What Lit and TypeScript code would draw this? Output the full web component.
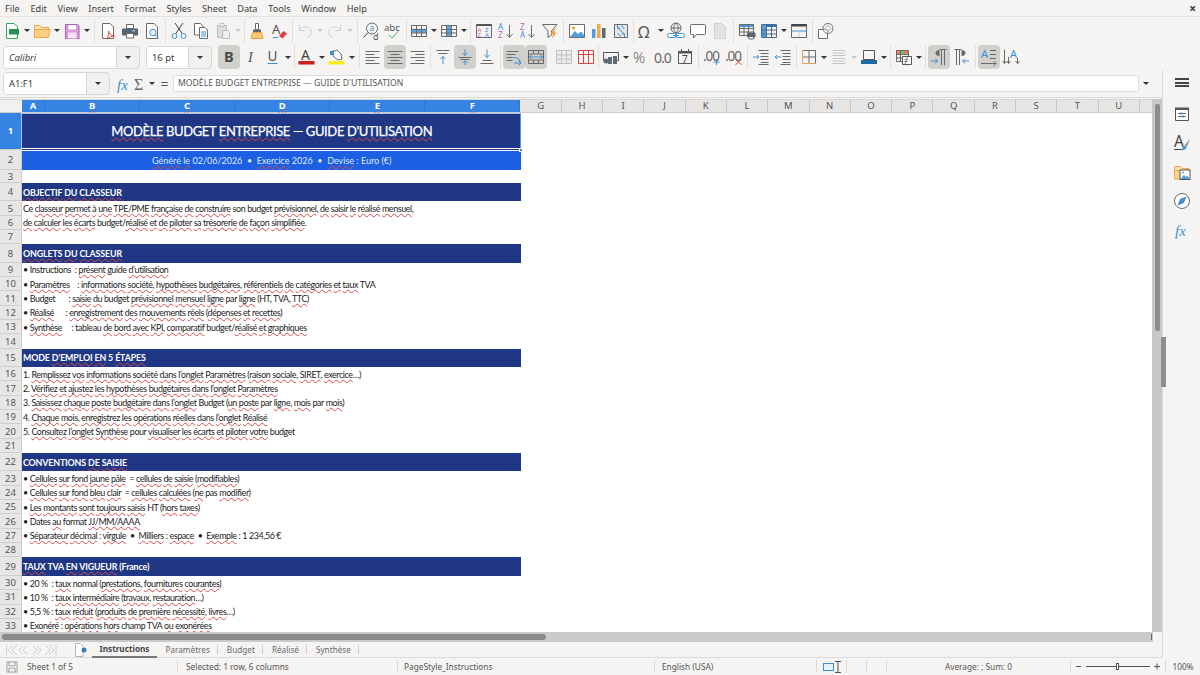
import { html, css, svg, LitElement, TemplateResult } from 'lit';
import { customElement } from 'lit/decorators.js';

const G = '#6a6a6a';
const B = '#3a8fd6';
const T = (x: number, y: number, s: string, size: number, fill = '#555', extra = '') =>
  svg`<text x=${x} y=${y} font-size=${size} fill=${fill} style=${extra}>${s}</text>`;
const P = (d: string, c = G, f = 'none') => svg`<path d=${d} stroke=${c} fill=${f} />`;
const grid = (c = G) =>
  P('M1.5 3.5h15v11h-15zM1.5 7.5h15M1.5 11h15M6.5 3.5v11M11.5 3.5v11', c);

const icons: Record<string, TemplateResult> = {
  new: svg`${P('M3.5 1.5h7.5l3.5 3.5v11.5h-11z', '#35a266', '#fff')}<rect x="6" y="7" width="10" height="5.5" fill="#2a8f52" />`,
  open: svg`${P('M1.5 3.5h5.5l1.5 2h7v2h-14z', '#eda54a', '#fde3b4')}${P('M1.5 7.5h15.5l-1.5 8h-14z', '#eda54a', '#fccf85')}`,
  save: svg`${P('M2.5 2.5h12l1.5 1.5v12.5h-13.5z', '#b657bb', '#d89bdc')}<rect x="5.5" y="3" width="7.5" height="4.5" fill="#fff" /><rect x="5" y="10.5" width="8.5" height="6" fill="#f4e4f5" />`,
  pdf: svg`${P('M3.5 1.5h7.5l3.5 3.5v11.5h-11z', G, '#fff')}${P('M8 16c2-2 2-6 1.5-7c1 3 3 5 6 5c-3 0-5 1-7 3', '#d84a3a')}`,
  print: svg`${P('M5.5 2.5h7v4h-7z', G, '#fff')}<rect x="1" y="6.5" width="16" height="7" rx="1" fill="#56656f" /><rect x="11" y="8" width="3" height="1.5" fill="#8fc0e6" />${P('M5.5 11.5h7v4.5h-7z', G, '#fff')}`,
  preview: svg`${P('M3.5 1.5h7.5l3.5 3.5v11.5h-11z', G, '#fff')}<circle cx="10" cy="10.5" r="3.2" stroke=${B} fill="#e5f1fb" />${P('M12.5 13l3 3.5', B)}`,
  cut: svg`${P('M5 1l7.5 11M13 1l-7.5 11', '#444')}<circle cx="4.5" cy="14" r="2.5" stroke=${B} fill="none" /><circle cx="13.5" cy="14" r="2.5" stroke=${B} fill="none" />`,
  copy: svg`${P('M2.5 1.5h6l2.5 2.5v9h-8.5z', G, '#fff')}${P('M7.5 5.5h5.5l2.5 2.5v8.5h-8z', G, '#fff')}${P('M9 10h5M9 12h5M9 14h5', B)}`,
  paste: svg`${P('M3.5 3.5h9v12h-9z', '#bcbcbc', '#dedede')}${P('M6 1.5h4v3h-4z', '#bcbcbc', '#f0f0f0')}${P('M8.5 8.5h5l2 2v6h-7z', '#bcbcbc', '#efefef')}`,
  clone: svg`${P('M7.5 1.5h3v6h-3z', '#6a6a6a', '#fff')}<rect x="5" y="7.5" width="8" height="2.5" fill="#666" />${P('M4.5 10.5h9l1.5 6h-12z', '#e8a33d', '#fcc77a')}`,
  clear: svg`${T(2, 12, 'A', 13, '#555')}${P('M3 15.5h5', B)}<path d="M9 14l4.5-5l3.5 2.5l-4.5 5z" fill="#e23b3b" />`,
  undo: svg`${P('M3.5 3v5.5h5.5', '#cfcfcf')}${P('M3.5 8.5c3-5 10-5 11.5 0c1 3-1 6-4 7', '#cfcfcf')}`,
  redo: svg`<g transform="matrix(-1 0 0 1 18 0)">${P('M3.5 3v5.5h5.5', '#cfcfcf')}${P('M3.5 8.5c3-5 10-5 11.5 0c1 3-1 6-4 7', '#cfcfcf')}</g>`,
  find: svg`<circle cx="10" cy="6.5" r="5.5" stroke=${G} fill="none" />${P('M6 10.5l-4.5 5', '#444')}${T(7.6, 9, 'a', 8, B)}${T(11, 17.5, 'd', 9, '#555')}`,
  spell: svg`${T(0, 8.5, 'abc', 9.5, '#555')}${P('M5 13l3 3l6-6.5', '#45b36b')}`,
  rows: svg`<rect x="1.5" y="6.8" width="15" height="4" fill="#5aa5e6" />${grid()}`,
  cols: svg`<rect x="6.5" y="3.5" width="5" height="11" fill="#5aa5e6" />${grid()}`,
  sort: svg`${P('M1.5 2.5h15v13h-15z', G)}<rect x="1.5" y="2" width="15" height="2" fill="#555" />${T(2.4, 9.5, 'A', 6, '#c45cc4')}${T(2.4, 15, 'Z', 6, '#c45cc4')}${T(10, 9.5, 'Z', 6, B)}${T(10, 15, 'A', 6, B)}`,
  asc: svg`${T(1, 8, 'A', 8, B)}${T(1, 16, 'Z', 8, '#c45cc4')}${P('M12.5 3v12M9.5 12l3 3.5l3-3.5', G)}`,
  desc: svg`${T(1, 8, 'Z', 8, '#c45cc4')}${T(1, 16, 'A', 8, B)}${P('M12.5 3v12M9.5 12l3 3.5l3-3.5', G)}`,
  filter: svg`${P('M1.5 2.5h14.5l-5.5 6.5v4l-3.5 2.5v-6.5z', G)}<path d="M13 7l-3.5 5h2.5l-1 4.5l4.5-6h-2.5l1.5-3.5z" fill="#f0a030" />`,
  image: svg`${P('M1.5 2.5h15v13h-15z', G, '#fff')}<circle cx="5.5" cy="6" r="1.6" fill="#f0a030" /><path d="M2 15l5-6l3 3l3-2.5l3 3.5v2z" fill="#4f9ddf" />`,
  chart: svg`<rect x="2" y="7" width="3.5" height="9" fill="#4f9ddf" /><rect x="7" y="2" width="3.5" height="14" fill="#f0a848" /><rect x="12" y="6" width="3.5" height="10" fill="#5c6b75" />`,
  pivot: svg`${P('M2.5 2.5h13v13h-13z', G, '#e9e9e9')}${P('M5.5 3v3h3M5.5 6l7 6M12.5 15v-3h-3M6 11c0 2 2 3 3 3M12 7c0-2-2-3-3-3', B)}`,
  omega: svg`${T(1, 15.5, 'Ω', 16, '#555')}`,
  link: svg`<circle cx="9" cy="6" r="5" stroke=${G} fill="none" />${P('M4 6h10M9 1c-3 3-3 7 0 10M9 1c3 3 3 7 0 10', G)}${P('M2.5 11.5h5a2 2 0 0 1 0 4h-5a2 2 0 0 1 0-4zM10.5 11.5h5a2 2 0 0 1 0 4h-5a2 2 0 0 1 0-4zM6 13.5h6', B, '#fff')}`,
  comment: svg`${P('M2.5 2.5h13a1 1 0 0 1 1 1v8a1 1 0 0 1-1 1h-8l-3 3.5v-3.5h-2a1 1 0 0 1-1-1v-8a1 1 0 0 1 1-1z', G, '#fff')}`,
  headers: svg`${P('M3.5 1.5h7.5l3.5 3.5v11.5h-11z', '#cfcfcf', '#e2e2e2')}`,
  tprint: svg`<rect x="1.5" y="2" width="14" height="3" fill="#4f9ddf" />${P('M1.5 2.5h14v11h-14zM1.5 6.5h14M1.5 10h14M6 2.5v11M10.5 2.5v11', G)}<rect x="9" y="10.5" width="8.5" height="5" rx="1" fill="#56656f" />${P('M11 14.5h4.5v2.5H11z', G, '#fff')}`,
  freeze: svg`<rect x="2" y="2" width="14" height="3" fill="#2d78bf" /><rect x="2" y="2" width="4" height="14" fill="#4f9ddf" />${P('M1.5 2.5h15v13h-15zM1.5 8h15M1.5 12h15M6.5 2.5v13M11.5 2.5v13', '#4b6b86')}`,
  split: svg`${P('M1.5 2.5h15v13h-15z', G)}<rect x="1.5" y="2" width="15" height="2.5" fill="#444" />${P('M1.5 9h15', B)}${P('M9 9v6', '#cfcfcf')}`,
  shapes: svg`${P('M1.5 7.5h9v9h-9z', G, '#fff')}<circle cx="11" cy="6.5" r="5" stroke=${G} fill="#fff" fill-opacity="0.5" />${P('M11 3.5l3 3l-3 3l-3-3z', '#999')}`,
  bold: svg`${T(4, 14, 'B', 14.5, '#4a4a4a', 'font-weight:700')}`,
  ital: svg`${T(6, 14, 'I', 14.5, '#555', 'font-family:Liberation Serif;font-style:italic')}`,
  under: svg`${T(3.6, 12.5, 'U', 13.5, '#555')}${P('M3.5 15.5h10', B)}`,
  color: svg`${T(3, 12, 'A', 14, '#444')}<rect x="0.5" y="13" width="16" height="3.5" fill="#c9211e" />`,
  hilite: svg`${P('M4 3h3l2-1l4 4l1 5l-4 1l-5-4z', G, '#fff')}<path d="M2 3h4v4h-4z" fill=${B} /><rect x="0.5" y="13" width="16" height="3.5" fill="#ffed1f" />`,
  aleft: P('M1.5 3.5h14M1.5 6.5h9M1.5 9.5h14M1.5 12.5h9M1.5 15.5h14'),
  acenter: P('M1.5 3.5h15M4.5 6.5h9M1.5 9.5h15M4.5 12.5h9M1.5 15.5h15'),
  aright: P('M2.5 3.5h14M7.5 6.5h9M2.5 9.5h14M7.5 12.5h9M2.5 15.5h14'),
  vtop: svg`${P('M2.5 2.5h13M4.5 5.5h9', G)}${P('M9 16V8.5M6.5 11l2.5-2.5l2.5 2.5', B)}`,
  vmid: svg`${P('M2.5 9.5h13M4.5 11.5h9', G)}${P('M9 1.5v6M6.5 5l2.5 2.5l2.5-2.5M9 17v-4M6.5 15l2.5-2.5l2.5 2.5', B)}`,
  vbot: svg`${P('M2.5 15.5h13M4.5 12.5h9', G)}${P('M9 1.5v8M6.5 7l2.5 2.5l2.5-2.5', B)}`,
  wrap: svg`${P('M1.5 3.5h12M1.5 6.5h9M1.5 9.5h6M1.5 12.5h6', G)}${P('M7 9.5c5 0 8 1 8 5M9 15h7M13.5 12.5l2.5 2.5l-2.5 2.5', B)}`,
  merge: svg`${P('M1.5 2.5h15v13h-15z', '#666')}${P('M1.5 6h15M1.5 12h15M6.5 2.5v3.5M11.5 2.5v3.5M6.5 12v3.5M11.5 12v3.5', '#666')}${P('M2 9h14M4.5 7l-2 2l2 2M13.5 7l2 2l-2 2', B)}`,
  unmerge: svg`${P('M1.5 2.5h15v13h-15zM1.5 7h15M1.5 11h15M6.5 2.5v13M11.5 2.5v13', '#c2c2c2', '#ececec')}`,
  delrow: svg`${P('M1.5 2.5h15v13h-15zM1.5 6.5h15M6.5 2.5v13M11.5 2.5v13', '#d04a45')}`,
  curr: svg`${P('M1.5 4.5h15v8h-2M1.5 4.5v8h4', '#555')}<rect x="6" y="9" width="4" height="7" fill="#5c6b75" /><rect x="11" y="8" width="4" height="8" fill="#5c6b75" /><circle cx="4" cy="13" r="2.5" fill="#5c6b75" />`,
  pct: svg`${T(1, 15, '%', 15, '#666', 'font-weight:300')}`,
  num: svg`${T(0, 14.5, '0.0', 14, '#666', 'letter-spacing:-1px')}`,
  date: svg`${P('M2.5 3.5h13v12h-13z', '#555')}<rect x="2" y="3" width="14" height="2.5" fill="#555" />${P('M5.5 1v3M12.5 1v3', '#555')}${T(6, 14.5, '7', 10, '#444')}`,
  adddec: svg`${T(0, 13, '.00', 13.5, '#666', 'letter-spacing:-1px')}${P('M13.5 11v6M10.5 14h6', B)}`,
  deldec: svg`${T(0, 13, '.00', 13.5, '#666', 'letter-spacing:-1px')}${P('M10.5 11l6 6M16.5 11l-6 6', '#e0443e')}`,
  indent: svg`${P('M6.5 2.5h10M8.5 5.5h8M8.5 8.5h8M8.5 11.5h8M8.5 14.5h8M6.5 16.5h10', G)}${P('M1 9h6M5 7l2 2l-2 2', B)}`,
  outdent: svg`${P('M6.5 2.5h10M8.5 5.5h8M8.5 8.5h8M8.5 11.5h8M8.5 14.5h8M6.5 16.5h10', G)}${P('M7 9H1M3 7l-2 2l2 2', B)}`,
  border: svg`${P('M2.5 2.5h13v13M9 2.5v13M2.5 9h13', G)}${P('M2.5 2.5v13h13', '#e8a060')}`,
  bstyle: P('M2.5 2.5h13M2.5 5h13M2.5 7.5h13M2.5 10.5h13M2.5 13h13M2.5 15.5h13', '#c4c4c4'),
  bcolor: svg`${P('M3.5 2.5h11v9h-11z', '#555')}<rect x="1" y="12" width="16" height="4" fill="#1c68a8" />`,
  cond: svg`<rect x="1" y="2" width="13" height="4" fill="#e97a6c" /><rect x="5.5" y="2" width="4" height="4" fill="#72bf6f" />${P('M1.5 2.5h12v11h-12zM1.5 6.5h12M1.5 10h12M5.5 2.5v11', G)}${P('M7.5 8.5h9v8h-9z', '#555', '#fff')}${T(9, 15.5, '≠', 8, '#444')}`,
  ltr: svg`${P('M9.5 1.5h7M11.5 2v15M14.5 2v15', G)}<path d="M9.5 2c-3 0-4 1.5-4 3s1 3 4 3z" fill=${G} />${P('M0.5 13h7M5 10.5l2.5 2.5l-2.5 2.5', B)}`,
  rtl: svg`${P('M2.5 1.5h7M4.5 2v15M7.5 2v15', G)}<path d="M9.5 2c3 0 4 1.5 4 3s-1 3-4 3z" fill=${G} />${P('M17 13h-6M13 10.5l-2.5 2.5l2.5 2.5', B)}`,
  horiz: svg`${T(1, 9.5, 'A', 11, B)}${P('M10 2.5h6M10 6.5h6M10 10.5h6M1 15.5h15M13.5 13l2.5 2.5l-2.5 2.5', G)}`,
  vert: svg`${T(8, 10, 'A', 11, B)}${P('M2.5 1.5v14M0.5 13l2 2.5l2-2.5M6.5 9v6.5M4.5 13l2 2.5l2-2.5M15.5 10v5.5M13.5 13l2 2.5l2-2.5', G)}`,
  props: svg`${P('M2.5 3.5h13v12h-13z', '#555', '#fff')}<rect x="2" y="2.5" width="14" height="2.5" fill="#555" />${P('M5 8.5h8M5 11.5h8', G)}${P('M8 7v3M10 10v3', B)}`,
  styles: svg`${T(1, 13, 'A', 15.5, '#444')}${P('M1 15.5h8', '#444')}<path d="M17 5l-5 6l2 1.5z" fill="#888" /><path d="M10 12c2-1 4 0 3.5 2c-1 2-4 2.5-5.500 2c1-.5 1.500-2 2-4z" fill="#4f9ddf" />`,
  gallery: svg`${P('M1.5 3.5h6l1.5 2h7v2h-14.5z', '#eda54a', '#fde3b4')}${P('M1.5 7.5h7v8.5h-7z', '#eda54a', '#fcd28d')}<rect x="7" y="7" width="10" height="9.5" fill="#fff" stroke="#555" /><path d="M7.5 16l3.5-4l2 2l1.5-1.5l2 3.5z" fill="#4f9ddf" /><circle cx="10" cy="9.5" r="1" fill="#4f9ddf" />`,
  nav: svg`<circle cx="9" cy="9" r="7.5" stroke=${G} fill="#fff" /><path d="M13.5 4.5l-2.5 6.5l-6.5 2.5l2.500-6.500z" fill="#3f8fd2" />`,
  fx: svg`${T(2, 14.5, 'fx', 15, B, 'font-family:Liberation Serif;font-style:italic')}`,
  sum: svg`${T(3, 15, 'Σ', 16, '#666', 'font-family:Liberation Serif')}`,
};

const tb1: (string | number)[] = ['new', 'a', 'open', 'a', 'save', 'a', 6, 'pdf', 'print', 'preview', 5, 'cut', 'copy', 'paste', 'd', 4,
  'clone', 'clear', 4, 'undo', 'd', 'redo', 'd', 6, 'find', 'spell', 4, 'rows', 'a', 'cols', 'a', 5, 'sort', 'asc', 'desc', 'filter', 5,
  'image', 'chart', 'pivot', 3, 'omega', 'a', 'link', 'comment', 'headers', 5, 'tprint', 'freeze', 'a', 'split', 5, 'shapes'];
const tb2: (string | number)[] = ['*bold', 'ital', 'under', 'a', 4, 'color', 'a', 'hilite', 'a', 6, 'aleft', '*acenter', 'aright', 4,
  'vtop', '*vmid', 'vbot', 5, '*wrap', '*merge', -6, 'unmerge', 'delrow', 3, 'curr', 'a', 'pct', 'num', 'date', 5, 'adddec', 'deldec', 5,
  'indent', 'outdent', 4, 'border', 'a', 'bstyle', 'd', 'bcolor', 'a', 5, 'cond', 'a', 5, '*ltr', 'rtl', 6, '*horiz', 'vert'];

const menus = ['File', 'Edit', 'View', 'Insert', 'Format', 'Styles', 'Sheet', 'Data', 'Tools', 'Window', 'Help'];
const columns = ['A', 'B', 'C', 'D', 'E', 'F', 'G', 'H', 'I', 'J', 'K', 'L', 'M', 'N', 'O', 'P', 'Q', 'R', 'S', 'T', 'U'];

// kind + text, ~word~ gets the spell check underline
const rows: [string, string][] = [
  ['title', "~MODÈLE~ BUDGET ~ENTREPRISE~ — GUIDE ~D'UTILISATION~"],
  ['sub', '~Généré~ ~le~ 02/06/2026  •  ~Exercice~ 2026  •  ~Devise~ : Euro (€)'],
  ['gap', ''],
  ['sec', '~OBJECTIF~ ~DU~ ~CLASSEUR~'],
  ['txt', 'Ce ~classeur~ ~permet~ ~à~ ~une~ ~TPE/PME~ ~française~ ~de~ ~construire~ son budget ~prévisionnel~, ~de~ ~saisir~ ~le~ ~réalisé~ ~mensuel~,'],
  ['txt', '~de~ ~calculer~ ~les~ ~écarts~ budget/~réalisé~ ~et~ ~de~ ~piloter~ ~sa~ ~trésorerie~ ~de~ ~façon~ ~simplifiée~.'],
  ['txt', ''],
  ['sec', '~ONGLETS~ ~DU~ ~CLASSEUR~'],
  ['txt', '• Instructions  : ~présent~ guide ~d’utilisation~'],
  ['txt', '• ~Paramètres~    : ~informations~ ~société~, ~hypothèses~ ~budgétaires~, ~référentiels~ ~de~ ~catégories~ ~et~ ~taux~ TVA'],
  ['txt', '• Budget       : ~saisie~ ~du~ budget ~prévisionnel~ ~mensuel~ ~ligne~ par ~ligne~ (HT, TVA, ~TTC~)'],
  ['txt', '• ~Réalisé~      : ~enregistrement~ ~des~ ~mouvements~ ~réels~ (~dépenses~ ~et~ ~recettes~)'],
  ['txt', '• ~Synthèse~     : tableau ~de~ ~bord~ ~avec~ ~KPI~, ~comparatif~ budget/~réalisé~ ~et~ ~graphiques~'],
  ['txt', ''],
  ['sec', "MODE ~D'EMPLOI~ ~EN~ 5 ~ÉTAPES~"],
  ['txt', '1. ~Remplissez~ ~vos~ ~informations~ ~société~ ~dans~ ~l’onglet~ ~Paramètres~ (~raison~ ~sociale~, ~SIRET~, ~exercice~…)'],
  ['txt', '2. ~Vérifiez~ ~et~ ~ajustez~ ~les~ ~hypothèses~ ~budgétaires~ ~dans~ ~l’onglet~ ~Paramètres~'],
  ['txt', '3. ~Saisissez~ ~chaque~ ~poste~ ~budgétaire~ ~dans~ ~l’onglet~ Budget (~un~ ~poste~ par ~ligne~, ~mois~ par ~mois~)'],
  ['txt', '4. ~Chaque~ ~mois~, ~enregistrez~ ~les~ ~opérations~ ~réelles~ ~dans~ ~l’onglet~ ~Réalisé~'],
  ['txt', '5. ~Consultez~ ~l’onglet~ ~Synthèse~ pour ~visualiser~ ~les~ ~écarts~ ~et~ ~piloter~ ~votre~ budget'],
  ['txt', ''],
  ['sec', 'CONVENTIONS ~DE~ ~SAISIE~'],
  ['txt', '• ~Cellules~ ~sur~ ~fond~ ~jaune~ ~pâle~  = ~cellules~ ~de~ ~saisie~ (~modifiables~)'],
  ['txt', '• ~Cellules~ ~sur~ ~fond~ ~bleu~ ~clair~  = ~cellules~ ~calculées~ (~ne~ pas ~modifier~)'],
  ['txt', '• ~Les~ ~montants~ ~sont~ ~toujours~ ~saisis~ HT (~hors~ ~taxes~)'],
  ['txt', '• Dates ~au~ format ~JJ/MM/AAAA~'],
  ['txt', '• ~Séparateur~ ~décimal~ : ~virgule~  •  ~Milliers~ : ~espace~  •  ~Exemple~ : 1 234,56 €'],
  ['txt', ''],
  ['sec', '~TAUX~ TVA ~EN~ ~VIGUEUR~ (France)'],
  ['txt', '• 20 %  : ~taux~ normal (~prestations~, ~fournitures~ ~courantes~)'],
  ['txt', '• 10 %  : ~taux~ ~intermédiaire~ (~travaux~, ~restauration~…)'],
  ['txt', '• 5,5 % : ~taux~ ~réduit~ (~produits~ ~de~ ~première~ ~nécessité~, ~livres~…)'],
  ['txt', '• ~Exonéré~ : ~opérations~ ~hors~ champ TVA ~ou~ ~exonérées~'],
];

const ic = (k: string) => html`<svg class="ic" viewBox="0 0 18 18">${icons[k]}</svg>`;
const tri = html`<i class="tri"></i>`;

@customElement('app-root')
export class AppRoot extends LitElement {
  static override styles = css`
    :host {
      display: flex;
      flex-direction: column;
      width: 1200px;
      height: 675px;
      overflow: hidden;
      background: #f5f4f3;
      color: #3c3c3c;
      font-family: 'Noto Sans', sans-serif;
      font-size: 10px;
    }
    text {
      font-family: 'Noto Sans', sans-serif;
    }
    path {
      stroke-width: 1;
    }
    .menu {
      display: flex;
      height: 16px;
      padding: 0 16px 0 5px;
      gap: 10.7px;
      align-items: center;
      border-bottom: 1px solid #e3e2e0;
      font-size: 9.2px;
    }
    .close {
      margin-left: auto;
      margin-right: -12px;
      font-size: 12px;
      font-weight: 700;
      color: #333;
    }
    .tb {
      display: flex;
      align-items: center;
      height: 26px;
    }
    .tb1 {
      padding-left: 1px;
      height: 27px;
    }
    .tb2 {
      padding-left: 3px;
    }
    .btn {
      flex: none;
      display: flex;
      align-items: center;
      justify-content: center;
      width: 22px;
      height: 24px;
      border-radius: 4px;
    }
    .btn.on {
      background: #d2d0cd;
    }
    .ic {
      width: 18px;
      height: 18px;
      flex: none;
      overflow: visible;
    }
    .arrow {
      flex: none;
      width: 8px;
      display: flex;
      justify-content: center;
    }
    .tri {
      width: 0;
      height: 0;
      border-left: 3px solid transparent;
      border-right: 3px solid transparent;
      border-top: 3px solid #333;
    }
    .arrow.dis .tri {
      border-top-color: #c8c8c8;
    }
    .sep {
      flex: none;
      display: flex;
      justify-content: center;
      height: 24px;
    }
    .sep::after {
      content: '';
      width: 1px;
      background: #e1e0de;
    }
    .combo {
      flex: none;
      display: flex;
      height: 23px;
      box-sizing: border-box;
      border: 1px solid #d8d6d3;
      border-radius: 4px;
      overflow: hidden;
      background: #f1f0ef;
      margin-right: 6px;
      font-size: 9.4px;
    }
    .combo span {
      flex: 1;
      background: #fff;
      display: flex;
      align-items: center;
      padding-left: 5px;
      border-right: 1px solid #d8d6d3;
    }
    .combo b {
      flex: none;
      width: 22px;
      display: flex;
      align-items: center;
      justify-content: center;
    }
    .font {
      width: 137px;
    }
    .font span {
      font-style: italic;
    }
    .size {
      width: 66px;
    }
    .work {
      flex: 1;
      display: flex;
      min-height: 0;
    }
    .left {
      flex: 1;
      display: flex;
      flex-direction: column;
      min-width: 0;
    }
    .fbar {
      flex: none;
      display: flex;
      align-items: center;
      height: 28px;
      padding-left: 3px;
      border-bottom: 1px solid #dcdbd9;
      box-sizing: border-box;
    }
    .name {
      width: 107px;
      margin-right: 6px;
    }
    .fbtn {
      flex: none;
      width: 16px;
      display: flex;
      justify-content: center;
    }
    .eq {
      flex: none;
      width: 17px;
      text-align: center;
      font-size: 14px;
      color: #555;
    }
    .input {
      flex: none;
      width: 966px;
      height: 17px;
      padding-left: 4px;
      box-sizing: border-box;
      background: #fff;
      border: 1px solid #dedddb;
      border-radius: 2px;
      font-size: 8.65px;
      line-height: 15px;
      color: #555;
      white-space: pre;
    }
    .fdrop {
      flex: none;
      width: 14px;
      display: flex;
      justify-content: center;
    }
    .sheet {
      flex: 1;
      display: flex;
      min-height: 0;
      padding-top: 1px;
    }
    .pane {
      flex: 1;
      min-width: 0;
      overflow: hidden;
      background: #fff;
    }
    .heads {
      display: flex;
      height: 14px;
      background: #e7e6e4;
      box-sizing: border-box;
      border-top: 1px solid #d8d7d5;
      border-bottom: 1px solid #cfcecc;
    }
    .corner {
      flex: none;
      width: 22px;
      background: #f2f1f0;
    }
    .ch {
      flex: none;
      box-sizing: border-box;
      width: 41.3px;
      border-right: 1px solid #c9c8c6;
      text-align: center;
      font-size: 9.5px;
      line-height: 12px;
      color: #555;
    }
    .ch.a {
      width: 23px;
    }
    .ch.w {
      width: 95.1px;
    }
    .ch.sel {
      background: #3584e4;
      color: #fff;
      font-weight: 700;
      border-right-color: #2f76cc;
    }
    .row {
      display: flex;
      position: relative;
    }
    .rh {
      flex: none;
      box-sizing: border-box;
      width: 22px;
      background: #e7e6e4;
      border-bottom: 1px solid #cfcecc;
      border-right: 1px solid #cfcecc;
      display: flex;
      align-items: center;
      justify-content: center;
      font-size: 9.5px;
      color: #555;
    }
    .cell {
      flex: none;
      box-sizing: border-box;
      width: 498.5px;
      display: flex;
      align-items: center;
      white-space: pre;
      padding-left: 1px;
      font-family: Lato, 'Liberation Sans', sans-serif;
      font-size: 8.9px;
      letter-spacing: -0.38px;
      color: #1a1a1a;
    }
    .txt {
      height: 14.33px;
    }
    .gap {
      height: 13px;
    }
    .sec {
      height: 18.4px;
    }
    .sec .cell {
      background: #1f3784;
      color: #fff;
      font-weight: 700;
      font-size: 8.9px;
      letter-spacing: -0.15px;
    }
    .sub {
      height: 20.5px;
    }
    .sub .cell {
      background: #1c5fe3;
      color: #dfe8fb;
      justify-content: center;
      font-size: 9px;
      letter-spacing: 0;
      border-top: 1px solid #fff;
    }
    .title {
      height: 36.5px;
    }
    .title .rh {
      background: #3584e4;
      color: #fff;
      font-weight: 700;
    }
    .title .cell {
      background: #1f3784;
      color: #fff;
      justify-content: center;
      font-size: 13px;
      letter-spacing: -0.38px;
      -webkit-text-stroke: 0.25px #fff;
    }
    .mark {
      position: absolute;
      left: 21px;
      top: 0;
      width: 499.5px;
      height: 36px;
      box-sizing: border-box;
      border: 1px solid #a8c6ee;
      border-bottom-color: #fff;
      border-right-color: #5a94d8;
    }
    .handle {
      position: absolute;
      left: 518.5px;
      top: 34.5px;
      width: 4px;
      height: 4px;
      background: #3584e4;
      border: 1px solid #fff;
      box-sizing: border-box;
      z-index: 1;
    }
    .w {
      text-decoration: underline wavy #d84a4a 1px;
      text-underline-offset: 1px;
      text-decoration-skip-ink: none;
    }
    .vs {
      flex: none;
      width: 10px;
      background: #c9c8c7;
      padding: 5px 3px 0 3px;
      box-sizing: border-box;
    }
    .vs i {
      display: block;
      width: 5px;
      height: 227px;
      border-radius: 2px;
      background: #8c8c8c;
    }
    .hs {
      flex: none;
      height: 10px;
      background: #cbcac9;
      padding: 2px 9px 0 2px;
      display: flex;
      justify-content: space-between;
      box-sizing: border-box;
      margin-right: 9px;
    }
    .hs i {
      display: block;
      width: 544px;
      height: 6px;
      border-radius: 3px;
      background: #8a8a8a;
    }
    .hs b {
      width: 1px;
      height: 6px;
      background: #666;
      margin-right: -8px;
    }
    .tabs {
      flex: none;
      height: 16px;
      display: flex;
      align-items: center;
      border-bottom: 1px solid #dcdbd9;
      box-sizing: border-box;
      color: #6a6a6a;
      font-size: 8.2px;
    }
    .nav {
      flex: none;
      width: 73px;
      padding-left: 5px;
      box-sizing: border-box;
      height: 14px;
    }
    .nav svg {
      width: 62px;
      height: 14px;
      display: block;
    }
    .addtab {
      flex: none;
      width: 19px;
      height: 15px;
    }
    .tab {
      flex: none;
      position: relative;
      padding: 0 8.5px;
      line-height: 15px;
    }
    .tab + .tab::after {
      content: '';
      position: absolute;
      right: 0;
      top: 3px;
      height: 9px;
      width: 1px;
      background: #cfcecc;
    }
    .tab.on {
      padding: 0;
      width: 65px;
      box-sizing: border-box;
      text-align: center;
      font-weight: 700;
      color: #444;
      border-bottom: 2px solid #77787a;
      line-height: 14px;
      height: 16px;
    }
    .side {
      flex: none;
      position: relative;
      width: 38px;
      border-left: 1px solid #dcdbd9;
      box-sizing: border-box;
      display: flex;
      flex-direction: column;
      align-items: center;
      padding-top: 4px;
      gap: 11px;
    }
    .side .ic {
      margin-left: 1px;
    }
    .burger {
      width: 14px;
      height: 9px;
      margin: 4px 0 7px;
      border-top: 2px solid #444;
      border-bottom: 2px solid #444;
      position: relative;
      box-sizing: border-box;
    }
    .burger::after {
      content: '';
      position: absolute;
      left: 0;
      right: 0;
      top: 1.5px;
      height: 2px;
      background: #444;
    }
    .grip {
      position: absolute;
      left: -2px;
      top: 267px;
      width: 5px;
      height: 50px;
      background: #8e8e8e;
    }
    .status {
      flex: none;
      display: flex;
      align-items: center;
      height: 17px;
      color: #555;
      font-size: 8.3px;
    }
    .st {
      flex: none;
      box-sizing: border-box;
      height: 13px;
      line-height: 13px;
      border-right: 1px solid #dcdbd9;
      white-space: pre;
    }
    .s-doc { width: 178px; display: flex; align-items: center; gap: 8px; padding-left: 5px; }
    .s-sel { width: 220px; padding-left: 8px; }
    .s-page { width: 257px; padding-left: 6px; }
    .s-lang { width: 162px; padding-left: 7px; }
    .s-ins { width: 30px; display: flex; align-items: center; justify-content: center; gap: 1px; }
    .s-a { width: 20px; }
    .s-avg { width: 184px; text-align: center; }
    .s-zoom { width: 95px; display: flex; align-items: center; justify-content: center; }
    .s-pct { flex: 1; border: 0; text-align: center; }
    .zm {
      width: 90px;
      height: 11px;
    }
  `;

  private words(t: string) {
    return t.split('~').map((p, i) => (i % 2 ? html`<span class="w">${p}</span>` : p));
  }

  private bar(items: (string | number)[]) {
    return items.map((it) => {
      if (typeof it === 'number') {
        return html`<div class="sep" style="width:${Math.abs(it)}px;${it < 0 ? 'visibility:hidden' : ''}"></div>`;
      }
      if (it === 'a') return html`<div class="arrow">${tri}</div>`;
      if (it === 'd') return html`<div class="arrow dis">${tri}</div>`;
      const on = it[0] === '*';
      return html`<div class="btn ${on ? 'on' : ''}">${ic(on ? it.slice(1) : it)}</div>`;
    });
  }

  override render() {
    return html`
      <div class="menu">
        ${menus.map((m) => html`<span>${m}</span>`)}
        <span class="close">×</span>
      </div>
      <div class="tb tb1">${this.bar(tb1)}</div>
      <div class="tb tb2">
        <div class="combo font"><span>Calibri</span><b>${tri}</b></div>
        <div class="combo size"><span>16 pt</span><b>${tri}</b></div>
        ${this.bar(tb2)}
      </div>
      <div class="work">
        <div class="left">
          <div class="fbar">
            <div class="combo name"><span>A1:F1</span><b>${tri}</b></div>
            <div class="fbtn">${ic('fx')}</div>
            <div class="fbtn">${ic('sum')}</div>
            <div class="arrow">${tri}</div>
            <div class="eq">=</div>
            <div class="input">MODÈLE BUDGET ENTREPRISE — GUIDE D'UTILISATION</div>
            <div class="fdrop">${tri}</div>
          </div>
          <div class="sheet">
            <div class="pane">
              <div class="heads">
                <div class="corner"></div>
                ${columns.map((c, i) => html`<div class="ch ${i === 0 ? 'a' : i < 6 ? 'w' : ''} ${i < 6 ? 'sel' : ''}">${c}</div>`)}
              </div>
              ${rows.map(
                ([kind, text], i) => html`
                  <div class="row ${kind}">
                    <div class="rh">${i + 1}</div>
                    <div class="cell"><div>${this.words(text)}</div></div>
                    ${i === 0 ? html`<div class="mark"></div><div class="handle"></div>` : ''}
                  </div>
                `
              )}
            </div>
            <div class="vs"><i></i></div>
          </div>
          <div class="hs"><i></i><b></b></div>
          <div class="tabs">
            <div class="nav">
              <svg viewBox="0 0 62 14">
                <path d="M1.5 2v10M8 2l-5 5l5 5M12 2l-5 5l5 5M18 3l-4 4l4 4M22 3l-4 4l4 4M28 3l4 4l-4 4M32 3l4 4l-4 4M40 2l5 5l-5 5M44 2l5 5l-5 5M51 2v10" stroke="#d0cfce" fill="none" />
              </svg>
            </div>
            <svg class="addtab" viewBox="0 0 19 15">
              <path d="M2.5 1.5h5l2.5 2.5v10.500h-7.500z" stroke="#b8b8b8" fill="#fff" />
              <circle cx="11" cy="8" r="2.5" fill="#3a7fc4" />
            </svg>
            <div class="tab on">Instructions</div>
            <div class="tab">Paramètres</div>
            <div class="tab">Budget</div>
            <div class="tab">Réalisé</div>
            <div class="tab">Synthèse</div>
          </div>
        </div>
        <div class="side">
          <div class="burger"></div>
          ${['props', 'styles', 'gallery', 'nav', 'fx'].map((k) => ic(k))}
          <div class="grip"></div>
        </div>
      </div>
      <div class="status">
        <div class="st s-doc">
          <svg class="ic" viewBox="0 0 18 18" style="width:14px;height:14px">
            <path d="M2.5 2.5h13v13h-13zM5 2.5v5h8v-5M5 15.5v-5h8v5" stroke="#8a8a8a" fill="none" />
          </svg>
          <span>Sheet 1 of 5</span>
        </div>
        <div class="st s-sel">Selected: 1 row, 6 columns</div>
        <div class="st s-page">PageStyle_Instructions</div>
        <div class="st s-lang">English (USA)</div>
        <div class="st s-ins">
          <svg width="11" height="8" viewBox="0 0 11 8"><rect x="0.5" y="0.5" width="10" height="7" stroke=${B} fill="#e8f2fb" /></svg>
          <svg width="6" height="12" viewBox="0 0 6 12"><path d="M0 .5h6M0 11.5h6M3 .5v11" stroke="#555" fill="none" /></svg>
        </div>
        <div class="st s-a"></div>
        <div class="st s-a"></div>
        <div class="st s-avg">Average: ; Sum: 0</div>
        <div class="st s-zoom">
          <svg class="zm" viewBox="0 0 90 11">
            <path d="M3 5.5h5M81 5.5h6M84 2.5v6M13 5.5h64" stroke="#555" fill="none" />
            <rect x="43.5" y="2.5" width="2" height="6" stroke="#555" fill="#fff" />
          </svg>
        </div>
        <div class="st s-pct">100%</div>
      </div>
    `;
  }
}

declare global {
  interface HTMLElementTagNameMap {
    'app-root': AppRoot;
  }
}
